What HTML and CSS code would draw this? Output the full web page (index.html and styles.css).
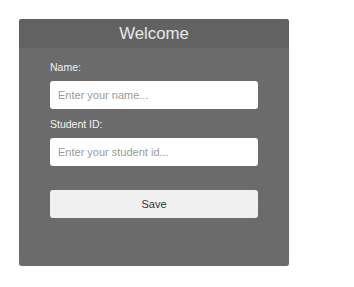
FILE: index.html
```html
<!DOCTYPE html>
<html lang="en">
<head>
  <meta charset="UTF-8">
  <title>Welcome</title>
  <meta name="viewport" content="width=device-width, initial-scale=1.0">
  <link rel="stylesheet" href="styles.css">
</head>
<body>
  <div class="card">
    <div class="card-header">Welcome</div>
    <form class="card-body" onsubmit="return false">
      <label class="field-label" for="name">Name:</label>
      <input class="field-input" id="name" type="text" placeholder="Enter your name...">
      <label class="field-label second" for="student-id">Student ID:</label>
      <input class="field-input" id="student-id" type="text" placeholder="Enter your student id...">
      <button class="btn-save" type="submit">Save</button>
    </form>
  </div>
</body>
</html>
```

FILE: styles.css
```css
body {
  margin: 0;
  padding: 19px;
  font-family: "Liberation Sans", Arial, sans-serif;
  background: #ffffff;
}

.card {
  width: 270px;
  background: #6b6b6b;
  border-radius: 3px;
  overflow: hidden;
  box-shadow: 0 0 1px rgba(0, 0, 0, 0.25);
}

.card-header {
  height: 29px;
  line-height: 29px;
  background: #626262;
  color: #e8e8e8;
  text-align: center;
  font-size: 16.8px;
}

.card-body {
  display: flex;
  flex-direction: column;
  padding: 13px 31px 48px 31px;
  margin: 0;
}

.field-label {
  font-size: 10.5px;
  line-height: 13px;
  color: #f2f2f2;
  margin-bottom: 7px;
}

.field-label.second {
  margin-top: 9px;
}

.field-input {
  box-sizing: border-box;
  height: 28px;
  width: 100%;
  margin: 0;
  padding: 0 8px;
  border: none;
  border-radius: 3px;
  background: #ffffff;
  font-family: inherit;
  font-size: 11px;
  color: #333;
  outline: none;
}

.field-input::placeholder {
  color: #9a9a9a;
}

.btn-save {
  box-sizing: border-box;
  height: 28px;
  width: 100%;
  margin-top: 24px;
  border: none;
  border-radius: 3px;
  background: #f0f0f0;
  color: #333;
  font-family: inherit;
  font-size: 11px;
  cursor: pointer;
}

.btn-save:hover {
  background: #e6e6e6;
}
```
